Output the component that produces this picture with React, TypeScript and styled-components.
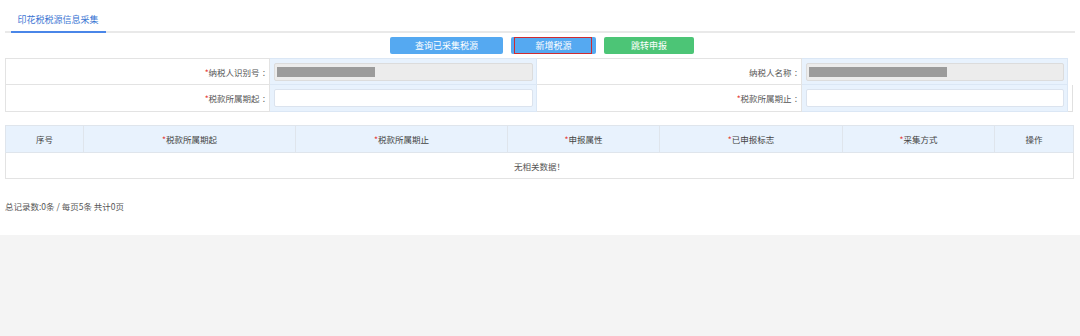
import React from "react";
import styled, { createGlobalStyle } from "styled-components";

const Global = createGlobalStyle`
  html, body { margin: 0; padding: 0; background: #f4f4f4; }
  body { font-family: "Noto Sans CJK SC", "Noto Sans", sans-serif; color: #555; }
  * { box-sizing: border-box; }
`;

const Page = styled.div`
  background: #fff;
  height: 235px;
`;

const TabBar = styled.div`
  margin: 0 5px;
  height: 33px;
  border-bottom: 2px solid #e9e9e9;
  display: flex;
  align-items: flex-end;
`;

const Tab = styled.div`
  margin-left: 6px;
  width: 95px;
  height: 33px;
  margin-bottom: -2px;
  border-bottom: 2px solid #4a86e8;
  color: #3a75d3;
  font-size: 9px;
  display: flex;
  align-items: center;
  justify-content: center;
  padding-top: 7px;
  padding-right: 1px;
`;

const ButtonRow = styled.div`
  margin-top: 4px;
  display: flex;
  justify-content: center;
  gap: 8px;
  padding-left: 4px;
`;

const Btn = styled.button<{ $color: string; $w: number; $focused?: boolean }>`
  position: relative;
  width: ${(p) => p.$w}px;
  height: 17px;
  border: none;
  border-radius: 2px;
  background: ${(p) => p.$color};
  color: #fff;
  font-family: inherit;
  font-size: 9px;
  padding: 0;
  line-height: 17px;
  cursor: pointer;
  &::after {
    content: "";
    display: ${(p) => (p.$focused ? "block" : "none")};
    position: absolute;
    top: 0;
    bottom: 0;
    left: 3px;
    right: 4px;
    border: 1px solid #cf2b30;
  }
`;

const FormGrid = styled.div`
  margin: 4px 0 0 5px;
  display: grid;
  grid-template-columns: 265px 267px 265px 266px 5px;
  grid-auto-rows: 27px;
`;

const LabelCell = styled.div<{ $first?: boolean; $top?: boolean }>`
  background: #fff;
  border-right: 1px solid #e3e3e3;
  border-bottom: 1px solid #e3e3e3;
  border-left: ${(p) => (p.$first ? "1px solid #e3e3e3" : "none")};
  border-top: ${(p) => (p.$top ? "1px solid #e3e3e3" : "none")};
  display: flex;
  align-items: center;
  justify-content: flex-end;
  padding-right: 4px;
  font-size: 8.5px;
  color: #555;
`;

const Colon = styled.span`
  margin-left: 3px;
`;

const InputCell = styled.div<{ $top?: boolean }>`
  background: #e8f2fd;
  border-right: 1px solid #dbe7f5;
  border-bottom: 1px solid #dbe7f5;
  border-top: ${(p) => (p.$top ? "1px solid #dbe7f5" : "none")};
  padding: 3px 3px 3px 4px;
  display: flex;
  align-items: center;
`;

const InputBox = styled.div<{ $readonly?: boolean }>`
  width: 100%;
  height: 18px;
  border: 1px solid ${(p) => (p.$readonly ? "#dcdcdc" : "#dbe3ee")};
  border-radius: 2px;
  background: ${(p) => (p.$readonly ? "#ececec" : "#fff")};
  padding: 2px;
  display: flex;
  align-items: center;
`;

const Masked = styled.div<{ $w: number }>`
  width: ${(p) => p.$w}px;
  height: 10px;
  background: #9b9b9b;
`;

const Filler = styled.div<{ $bordered?: boolean }>`
  border-right: ${(p) => (p.$bordered ? "1px solid #e0e0e0" : "none")};
  border-bottom: ${(p) => (p.$bordered ? "1px solid #e0e0e0" : "none")};
`;

const Star = styled.span`
  color: #e53935;
`;

const DataTable = styled.table`
  margin: 13px 0 0 5px;
  width: 1068px;
  table-layout: fixed;
  border-collapse: collapse;
  font-size: 8.5px;
`;

const Th = styled.th`
  height: 27px;
  background: #e8f2fd;
  border: 1px solid #dfe5ec;
  font-weight: normal;
  color: #444;
  text-align: center;
  padding: 0;
`;

const Td = styled.td`
  height: 26px;
  border: 1px solid #e3e3e3;
  text-align: center;
  color: #555;
  padding: 0;
`;

const Footer = styled.div`
  margin: 21px 0 0 5px;
  font-size: 8.5px;
  color: #555;
  line-height: 12px;
`;

const columns = [
  { w: 78, label: "序号", req: false },
  { w: 212, label: "税款所属期起", req: true },
  { w: 212, label: "税款所属期止", req: true },
  { w: 152, label: "申报属性", req: true },
  { w: 183, label: "已申报标志", req: true },
  { w: 152, label: "采集方式", req: true },
  { w: 79, label: "操作", req: false },
];

export default function App() {
  return (
    <>
      <Global />
      <Page>
        <TabBar>
          <Tab>印花税税源信息采集</Tab>
        </TabBar>
        <ButtonRow>
          <Btn $color="#55a9f1" $w={113}>查询已采集税源</Btn>
          <Btn $color="#55a9f1" $w={85} $focused>新增税源</Btn>
          <Btn $color="#4cc576" $w={90}>跳转申报</Btn>
        </ButtonRow>
        <FormGrid>
          <LabelCell $first $top>
            <Star>*</Star>纳税人识别号<Colon>:</Colon>
          </LabelCell>
          <InputCell $top>
            <InputBox $readonly>
              <Masked $w={98} />
            </InputBox>
          </InputCell>
          <LabelCell $top>
            纳税人名称<Colon>:</Colon>
          </LabelCell>
          <InputCell $top>
            <InputBox $readonly>
              <Masked $w={138} />
            </InputBox>
          </InputCell>
          <Filler />
          <LabelCell $first>
            <Star>*</Star>税款所属期起<Colon>:</Colon>
          </LabelCell>
          <InputCell>
            <InputBox />
          </InputCell>
          <LabelCell>
            <Star>*</Star>税款所属期止<Colon>:</Colon>
          </LabelCell>
          <InputCell>
            <InputBox />
          </InputCell>
          <Filler $bordered />
        </FormGrid>
        <DataTable>
          <colgroup>
            {columns.map((c) => (
              <col key={c.label} style={{ width: c.w }} />
            ))}
          </colgroup>
          <thead>
            <tr>
              {columns.map((c) => (
                <Th key={c.label}>
                  {c.req && <Star>*</Star>}
                  {c.label}
                </Th>
              ))}
            </tr>
          </thead>
          <tbody>
            <tr>
              <Td colSpan={7}>无相关数据！</Td>
            </tr>
          </tbody>
        </DataTable>
        <Footer>总记录数:0条 / 每页5条 共计0页</Footer>
      </Page>
    </>
  );
}
